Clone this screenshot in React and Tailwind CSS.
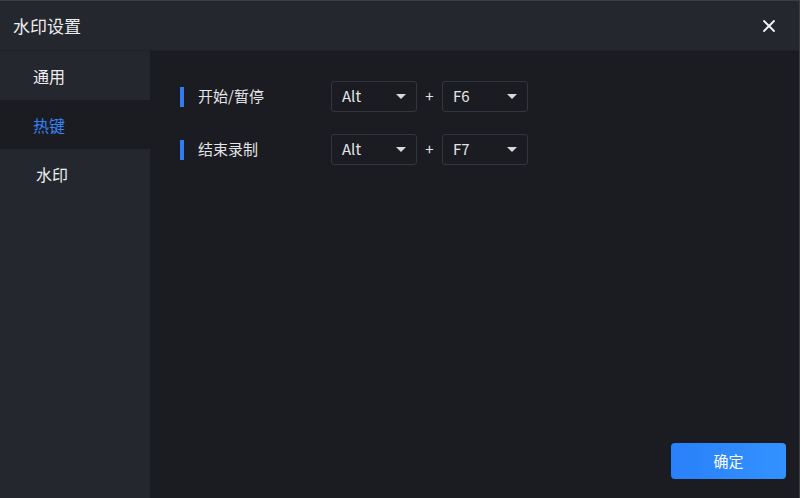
import { X } from "lucide-react";

const font = { fontFamily: '"Noto Sans CJK SC", "Noto Sans", sans-serif' };

function Caret() {
  return (
    <svg width="10" height="5" viewBox="0 0 10 5" className="fill-[#d8d9dc]">
      <path d="M0 0 H10 L5 5 Z" />
    </svg>
  );
}

function KeySelect({ value }) {
  return (
    <div className="w-[86px] h-[31px] flex items-center justify-between pl-[10px] pr-[10px] rounded-[3px] border border-[#33363d] bg-[#1b1c21] text-[15px] text-[#e4e5e8]">
      <span>{value}</span>
      <Caret />
    </div>
  );
}

function HotkeyRow({ label, mod, fkey }) {
  return (
    <div className="flex items-center h-[31px]">
      <div className="w-[4px] h-[20px] bg-[#2f7cf6]" />
      <div className="ml-[14px] w-[133px] text-[15px] text-[#e4e5e8]">{label}</div>
      <KeySelect value={mod} />
      <div className="w-[25px] text-center text-[15px] text-[#e4e5e8]">+</div>
      <KeySelect value={fkey} />
    </div>
  );
}

export default function App() {
  const tabs = [
    { name: "通用", pad: "pl-[33px]" },
    { name: "热键", pad: "pl-[33px]", active: true },
    { name: "水印", pad: "pl-[36px]" },
  ];

  return (
    <div
      style={font}
      className="w-[800px] h-[498px] flex flex-col bg-[#1b1c21] border-t border-r border-[#3b3e46] overflow-hidden"
    >
      <div className="h-[50px] shrink-0 flex items-center justify-between pl-[13px] pr-[20px] bg-[#25272e] border-b border-[#1f2126]">
        <span className="text-[17px] text-[#eceef0]">水印设置</span>
        <X size={20} strokeWidth={2.2} className="text-[#f2f3f5]" />
      </div>

      <div className="flex flex-1 min-h-0">
        <div className="w-[150px] shrink-0 bg-[#25272e]">
          {tabs.map((t) => (
            <div
              key={t.name}
              className={`h-[49px] flex items-center text-[16px] ${t.pad} ${
                t.active ? "bg-[#1b1c21] text-[#3583f5]" : "text-[#eceef0]"
              }`}
            >
              {t.name}
            </div>
          ))}
        </div>

        <div className="flex-1 flex flex-col">
          <div className="flex flex-col gap-[22px] pl-[30px] pt-[30px]">
            <HotkeyRow label="开始/暂停" mod="Alt" fkey="F6" />
            <HotkeyRow label="结束录制" mod="Alt" fkey="F7" />
          </div>
          <div className="flex-1" />
          <div className="flex justify-end pr-[13px] pb-[19px]">
            <button className="w-[115px] h-[36px] rounded-[4px] bg-gradient-to-r from-[#2a80fa] to-[#3392ff] text-white text-[15px]">
              确定
            </button>
          </div>
        </div>
      </div>
    </div>
  );
}
